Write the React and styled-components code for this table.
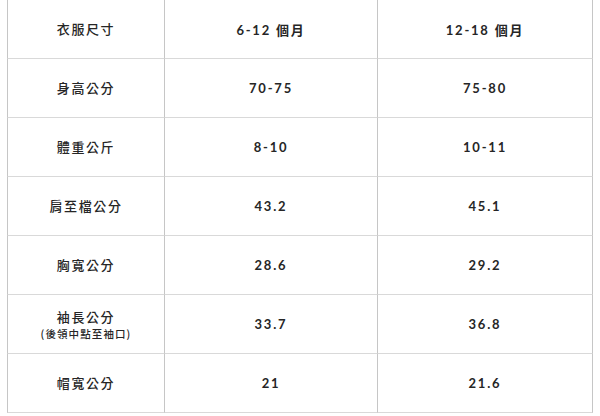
import React from "react";
import styled, { createGlobalStyle } from "styled-components";

const Global = createGlobalStyle`
  body {
    margin: 0;
    background: #fff;
  }
`;

const rows = [
  { label: "衣服尺寸", a: "6-12 個月", b: "12-18 個月" },
  { label: "身高公分", a: "70-75", b: "75-80" },
  { label: "體重公斤", a: "8-10", b: "10-11" },
  { label: "肩至檔公分", a: "43.2", b: "45.1" },
  { label: "胸寬公分", a: "28.6", b: "29.2" },
  { label: "袖長公分", note: "(後領中點至袖口)", a: "33.7", b: "36.8" },
  { label: "帽寬公分", a: "21", b: "21.6" },
];

const Table = styled.div`
  display: grid;
  grid-template-columns: 157px 213px 216px;
  grid-auto-rows: 59px;
  margin-left: 7px;
  width: 587px;
  font-family: "Noto Sans CJK TC", "Noto Sans", sans-serif;
  color: #262626;
`;

const Cell = styled.div`
  display: flex;
  flex-direction: column;
  align-items: center;
  justify-content: center;
  border-bottom: 1px solid #d9d9d9;
  border-left: 1px solid #c6c6c6;
  border-right: ${(p) => (p.$last ? "1px solid #c6c6c6" : "none")};
  box-sizing: border-box;
`;

const Label = styled.span`
  display: block;
  font-size: 13px;
  font-weight: 500;
  letter-spacing: 1.6px;
  line-height: 18px;
`;

const Note = styled.span`
  display: block;
  font-size: 10.5px;
  font-weight: 500;
  letter-spacing: 1.1px;
  line-height: 13px;
  padding-top: 1px;
`;

const Value = styled.span`
  font-family: "Lato", "Noto Sans CJK TC", sans-serif;
  font-size: 13px;
  font-weight: 700;
  letter-spacing: 1.8px;
`;

export default function App() {
  return (
    <>
      <Global />
      <Table>
        {rows.map((r) => (
          <React.Fragment key={r.label}>
            <Cell>
              <Label>{r.label}</Label>
              {r.note && <Note>{r.note}</Note>}
            </Cell>
            <Cell>
              <Value>{r.a}</Value>
            </Cell>
            <Cell $last>
              <Value>{r.b}</Value>
            </Cell>
          </React.Fragment>
        ))}
      </Table>
    </>
  );
}
